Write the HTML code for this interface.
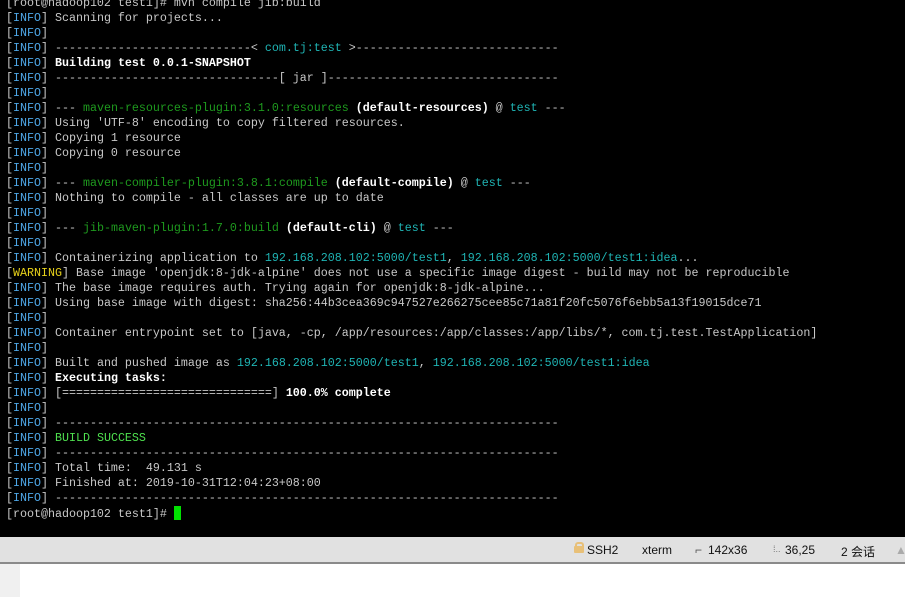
<!DOCTYPE html>
<html><head><meta charset="utf-8"><style>
html,body{margin:0;padding:0;width:905px;height:597px;overflow:hidden;background:#fff}
#t{position:absolute;left:0;top:0;width:905px;height:537px;background:#000;overflow:hidden}
pre{margin:0;position:absolute;left:6px;top:-4px;font-family:"Liberation Mono",monospace;font-size:11.67px;line-height:15px;color:#c8c8c8}
.i{color:#4ea6e6}.w{color:#e8d21a}.b{color:#fff;font-weight:bold}.g{color:#1e9a1e}.c{color:#1fb4b4}.s{color:#4fe04f;}
.cur{display:inline-block;width:7px;height:14px;background:#00e000;vertical-align:-3px}
#sb{position:absolute;left:0;top:537px;width:905px;height:25px;background:#e1e1e1;border-bottom:2px solid #8a8a8a;font-family:"Liberation Sans","Noto Sans CJK SC",sans-serif;font-size:12px;color:#111}
#sb span{position:absolute;top:6px}
#lf{position:absolute;left:0;top:564px;width:20px;height:33px;background:#f0f0f0}
</style></head><body>
<div id="t"><pre>[root@hadoop102 test1]# mvn compile jib:build
[<span class="i">INFO</span>] Scanning for projects...
[<span class="i">INFO</span>]
[<span class="i">INFO</span>] ----------------------------&lt; <span class="c">com.tj:test</span> &gt;-----------------------------
[<span class="i">INFO</span>] <span class="b">Building test 0.0.1-SNAPSHOT</span>
[<span class="i">INFO</span>] --------------------------------[ jar ]---------------------------------
[<span class="i">INFO</span>]
[<span class="i">INFO</span>] --- <span class="g">maven-resources-plugin:3.1.0:resources</span> <span class="b">(default-resources)</span> @ <span class="c">test</span> ---
[<span class="i">INFO</span>] Using 'UTF-8' encoding to copy filtered resources.
[<span class="i">INFO</span>] Copying 1 resource
[<span class="i">INFO</span>] Copying 0 resource
[<span class="i">INFO</span>]
[<span class="i">INFO</span>] --- <span class="g">maven-compiler-plugin:3.8.1:compile</span> <span class="b">(default-compile)</span> @ <span class="c">test</span> ---
[<span class="i">INFO</span>] Nothing to compile - all classes are up to date
[<span class="i">INFO</span>]
[<span class="i">INFO</span>] --- <span class="g">jib-maven-plugin:1.7.0:build</span> <span class="b">(default-cli)</span> @ <span class="c">test</span> ---
[<span class="i">INFO</span>]
[<span class="i">INFO</span>] Containerizing application to <span class="c">192.168.208.102:5000/test1</span>, <span class="c">192.168.208.102:5000/test1:idea</span>...
[<span class="w">WARNING</span>] Base image 'openjdk:8-jdk-alpine' does not use a specific image digest - build may not be reproducible
[<span class="i">INFO</span>] The base image requires auth. Trying again for openjdk:8-jdk-alpine...
[<span class="i">INFO</span>] Using base image with digest: sha256:44b3cea369c947527e266275cee85c71a81f20fc5076f6ebb5a13f19015dce71
[<span class="i">INFO</span>]
[<span class="i">INFO</span>] Container entrypoint set to [java, -cp, /app/resources:/app/classes:/app/libs/*, com.tj.test.TestApplication]
[<span class="i">INFO</span>]
[<span class="i">INFO</span>] Built and pushed image as <span class="c">192.168.208.102:5000/test1</span>, <span class="c">192.168.208.102:5000/test1:idea</span>
[<span class="i">INFO</span>] <span class="b">Executing tasks:</span>
[<span class="i">INFO</span>] [==============================] <span class="b">100.0% complete</span>
[<span class="i">INFO</span>]
[<span class="i">INFO</span>] ------------------------------------------------------------------------
[<span class="i">INFO</span>] <span class="s">BUILD SUCCESS</span>
[<span class="i">INFO</span>] ------------------------------------------------------------------------
[<span class="i">INFO</span>] Total time:  49.131 s
[<span class="i">INFO</span>] Finished at: 2019-10-31T12:04:23+08:00
[<span class="i">INFO</span>] ------------------------------------------------------------------------
[root@hadoop102 test1]# <span class="cur"></span></pre></div>
<div id="sb">
<span style="left:575px;top:5px;width:5px;height:4px;border:2px solid #e8c078;border-bottom:none;border-radius:3px 3px 0 0"></span>
<span style="left:574px;top:9px;width:10px;height:7px;background:#e8c078;border-radius:1px"></span>
<span style="left:587px">SSH2</span>
<span style="left:642px">xterm</span>
<span style="left:695px;color:#555">⌐</span>
<span style="left:708px">142x36</span>
<span style="left:773px;color:#777;font-size:9px;top:7px">⁞..</span>
<span style="left:785px">36,25</span>
<span style="left:841px">2 会话</span>
<span style="left:895px;color:#aaa">▲</span>
</div>
<div id="lf"></div>
</body></html>
